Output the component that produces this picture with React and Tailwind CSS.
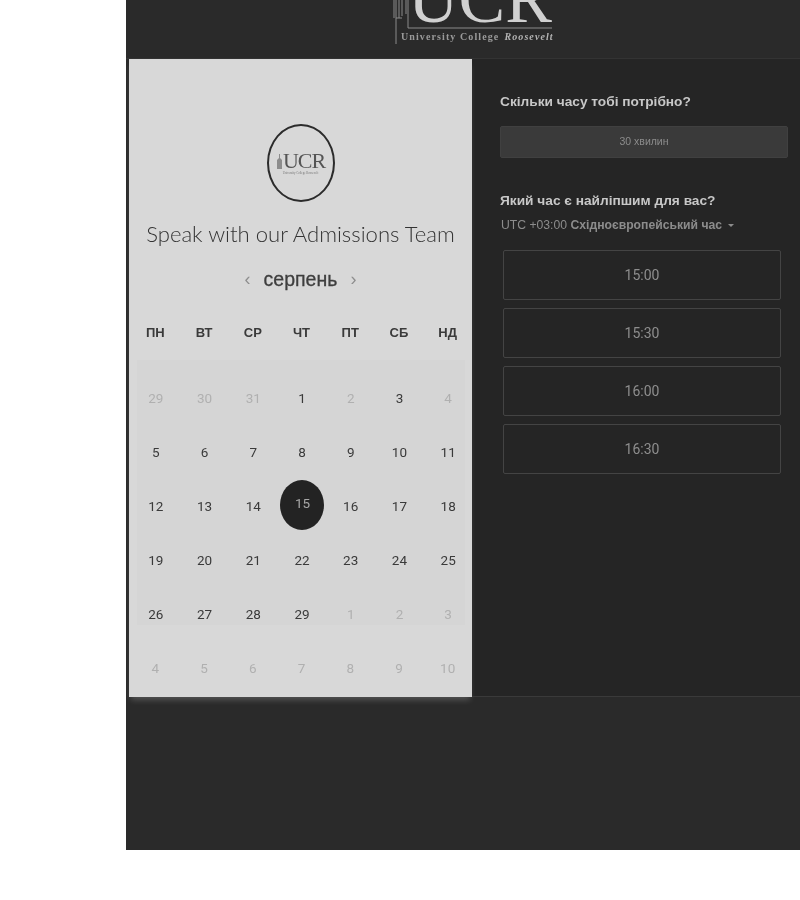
const sans = "font-['Liberation_Sans',Arial,sans-serif]"

const weekDays = ['ПН', 'ВТ', 'СР', 'ЧТ', 'ПТ', 'СБ', 'НД']

const days = [
  [29, 0], [30, 0], [31, 0], [1, 1], [2, 0], [3, 1], [4, 0],
  [5, 1], [6, 1], [7, 1], [8, 1], [9, 1], [10, 1], [11, 1],
  [12, 1], [13, 1], [14, 1], [15, 2], [16, 1], [17, 1], [18, 1],
  [19, 1], [20, 1], [21, 1], [22, 1], [23, 1], [24, 1], [25, 1],
  [26, 1], [27, 1], [28, 1], [29, 1], [1, 0], [2, 0], [3, 0]
]

const nextMonth = [4, 5, 6, 7, 8, 9, 10]

const slots = ['15:00', '15:30', '16:00', '16:30']

function TopLogo() {
  return (
    <div className="relative h-[46px] w-[160px] overflow-hidden">
      <svg className="absolute left-0 top-0" width="160" height="46" viewBox="0 0 160 46" fill="none" stroke="#8a8a8a" strokeWidth="1">
        <path d="M3 0V44M1 0V18M6 0V18M9 0V16M3 18H9M13 0V14M15 0V28H159" />
      </svg>
      <div className="absolute left-[15px] top-[-30px] font-['Liberation_Serif',serif] text-[70px] leading-[58px] text-[#d0d0d0]">
        UCR
      </div>
      <div className="absolute left-[8px] top-[31px] flex items-baseline gap-[5px] whitespace-nowrap font-['Liberation_Serif',serif] text-[10px] leading-[12px] font-bold tracking-[1.1px] text-[#9a9a9a]">
        <span>University College</span>
        <span className="italic text-[#b4b4b4]">Roosevelt</span>
      </div>
    </div>
  )
}

function RoundLogo() {
  return (
    <div className="flex h-[78px] w-[68px] items-center justify-center rounded-[50%] border-2 border-[#2b2b2b]">
      <div className="flex flex-col items-center">
        <div className="flex items-center">
          <svg width="7" height="15" viewBox="0 0 7 15" fill="#8c8c8c">
            <path d="M3 0h1v4l2 2v9H1V6l2-2z" />
          </svg>
          <span className="font-['Liberation_Serif',serif] text-[22px] leading-[20px] tracking-[-1px] text-[#555]">UCR</span>
        </div>
        <span className="mt-[1px] whitespace-nowrap font-['Liberation_Serif',serif] text-[3px] leading-[3px] text-[#777]">University College Roosevelt</span>
      </div>
    </div>
  )
}

function Calendar() {
  return (
    <div className="flex w-[343px] flex-col items-center bg-[#d8d8d8] shadow-[0_5px_6px_-2px_rgba(255,255,255,0.2)]">
      <div className="mt-[65px]">
        <RoundLogo />
      </div>
      <h1 className="mt-[17px] whitespace-nowrap font-['Lato',sans-serif] text-[22.1px] leading-[30px] font-light text-[#333]">
        Speak with our Admissions Team
      </h1>
      <div className={`mt-[16px] flex h-[30px] items-center gap-[13px] text-[#3e3e3e] ${sans}`}>
        <span className="-mt-[2px] text-[18px] text-[#8e8e8e]">‹</span>
        <span className="text-[19.5px] [-webkit-text-stroke:0.3px_#3e3e3e]">серпень</span>
        <span className="-mt-[2px] text-[18px] text-[#8e8e8e]">›</span>
      </div>
      <div className={`mt-[31px] ml-[2px] grid w-[341px] grid-cols-7 text-center text-[13px] leading-[14px] font-bold text-[#3a3a3a] ${sans}`}>
        {weekDays.map((day) => (
          <div key={day}>{day}</div>
        ))}
      </div>
      <div className="mt-[20px] h-[265px] w-[328px] bg-[#d5d5d5] pt-[11px]">
        <div className="-ml-[5px] grid w-[341px] grid-cols-7 text-center font-['Roboto',sans-serif] text-[13.5px]">
          {days.map(([day, kind], i) => (
            <div key={i} className="flex h-[54px] items-center justify-center">
              {kind === 2 ? (
                <span className="-mt-[2px] ml-[1px] flex h-[50px] w-[44px] items-center justify-center rounded-[50%] bg-[#232323] pb-[4px] text-[#a8a8a8]">
                  {day}
                </span>
              ) : (
                <span className={kind === 1 ? 'text-[#3a3a3a]' : 'text-[#b0b0b0]'}>{day}</span>
              )}
            </div>
          ))}
        </div>
      </div>
      <div className="mt-[16px] ml-[2px] grid w-[341px] grid-cols-7 text-center font-['Roboto',sans-serif] text-[13.5px] text-[#b0b0b0]">
        {nextMonth.map((day) => (
          <div key={day} className="flex h-[54px] items-center justify-center">{day}</div>
        ))}
      </div>
    </div>
  )
}

function Booking() {
  return (
    <div className={`flex-1 border-b border-[#3a3a3a] pt-[34px] pl-[28px] ${sans}`}>
      <h2 className="text-[13.7px] leading-[18px] font-bold text-[#c8c8c8]">Скільки часу тобі потрібно?</h2>
      <div className="mt-[15px] flex h-[32px] w-[288px] items-center justify-center rounded-[2px] border border-[#404040] bg-[#3a3a3a] text-[10.5px] text-[#8c8c8c]">
        30 хвилин
      </div>
      <h2 className="mt-[34px] text-[13.7px] leading-[18px] font-bold text-[#c8c8c8]">Який час є найліпшим для вас?</h2>
      <div className="mt-[8px] flex items-center gap-[6px] pl-[1px] text-[12.2px] leading-[14px] text-[#8c8c8c]">
        <span>
          UTC +03:00 <span className="font-bold">Східноєвропейський час</span>
        </span>
        <span className="h-0 w-0 border-x-[3px] border-t-[3px] border-x-transparent border-t-[#8c8c8c]" />
      </div>
      <div className="mt-[18px] ml-[3px] flex w-[278px] flex-col gap-[8px]">
        {slots.map((slot) => (
          <div
            key={slot}
            className="flex h-[50px] items-center justify-center rounded-[2px] border border-[#444] font-['Roboto',sans-serif] text-[14px] text-[#8e8e8e]"
          >
            {slot}
          </div>
        ))}
      </div>
    </div>
  )
}

export default function App() {
  return (
    <div className="h-[900px] w-[800px] overflow-hidden bg-white pl-[126px] blur-[0.4px]">
      <div className="flex h-[850px] flex-col bg-[#2a2a2a]">
        <header className="flex h-[59px] justify-center border-b border-[#333] pl-[20px]">
          <TopLogo />
        </header>
        <div className="flex h-[638px] bg-[#252525] pl-[3px] shadow-[inset_3px_0_0_#2a2a2a]">
          <Calendar />
          <Booking />
        </div>
      </div>
    </div>
  )
}
